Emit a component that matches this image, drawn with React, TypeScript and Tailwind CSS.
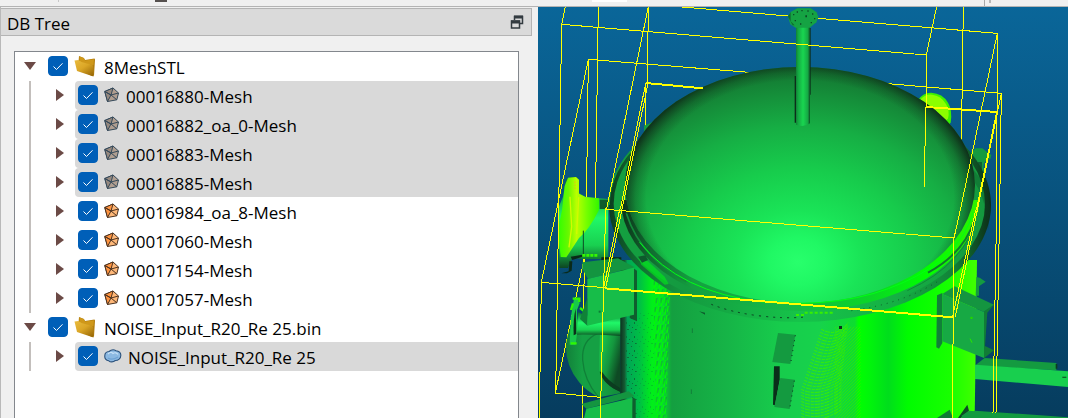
import { useState } from 'react';

type IconKind = 'mesh' | 'cloud';

interface TreeItem {
  id: string;
  name: string;
  icon: IconKind;
  selected: boolean;
}

interface TreeGroup {
  id: string;
  name: string;
  items: TreeItem[];
}

const GROUPS: TreeGroup[] = [
  {
    id: 'stl',
    name: '8MeshSTL',
    items: [
      { id: 'm1', name: '00016880-Mesh', icon: 'mesh', selected: true },
      { id: 'm2', name: '00016882_oa_0-Mesh', icon: 'mesh', selected: true },
      { id: 'm3', name: '00016883-Mesh', icon: 'mesh', selected: true },
      { id: 'm4', name: '00016885-Mesh', icon: 'mesh', selected: true },
      { id: 'm5', name: '00016984_oa_8-Mesh', icon: 'mesh', selected: false },
      { id: 'm6', name: '00017060-Mesh', icon: 'mesh', selected: false },
      { id: 'm7', name: '00017154-Mesh', icon: 'mesh', selected: false },
      { id: 'm8', name: '00017057-Mesh', icon: 'mesh', selected: false },
    ],
  },
  {
    id: 'noise',
    name: 'NOISE_Input_R20_Re 25.bin',
    items: [{ id: 'c1', name: 'NOISE_Input_R20_Re 25', icon: 'cloud', selected: true }],
  },
];

function Arrow({ open }: { open: boolean }) {
  return (
    <svg width="12" height="12" viewBox="0 0 12 12" fill="#6b4a46">
      {open ? <path d="M0 2h12L6 10z" /> : <path d="M2 0v12l8-6z" />}
    </svg>
  );
}

function CheckBox({ id }: { id: string }) {
  return (
    <span className="relative block size-5 shrink-0">
      <input
        id={id}
        type="checkbox"
        defaultChecked
        className="peer block size-5 appearance-none rounded border border-[#8a8a8a] bg-white checked:border-[#005fb8] checked:bg-[#005fb8]"
      />
      <svg
        className="pointer-events-none absolute inset-0 hidden peer-checked:block"
        viewBox="0 0 20 20"
        fill="none"
        stroke="white"
        strokeWidth="1"
      >
        <path d="M5.500 10.500l3 3 6-6.200" />
      </svg>
    </span>
  );
}

function FolderIcon() {
  return (
    <svg width="22" height="22" viewBox="0 0 22 22" className="shrink-0">
      <defs>
        <linearGradient id="folder" x1="0" y1="0" x2="0.8" y2="1">
          <stop offset="0" stopColor="#e9bb3e" />
          <stop offset="0.5" stopColor="#dba626" />
          <stop offset="1" stopColor="#9c6c08" />
        </linearGradient>
      </defs>
      <path d="M5 1l5 2 1 2 9.500-1.500.5 1-1 16-2 .5L4 14z" fill="#b17c0c" />
      <path d="M5.500 1.500L9.500 3l1.500 2.500 9-1.300-.5 6-14-3z" fill="#cf981a" />
      <path d="M.5 5.500l4-.5 3 2L17 9.500c1.500.4 2 1 2.200 2.500L19.500 21.500 3 16z" fill="url(#folder)" />
    </svg>
  );
}

function MeshIcon({ dim }: { dim: boolean }) {
  return (
    <svg
      width="16"
      height="16"
      viewBox="0 0 16 16"
      className="shrink-0"
      stroke={dim ? '#34495a' : '#4b3220'}
      strokeWidth="1"
      strokeLinejoin="round"
    >
      <path d="M9 1l5.500 5L12.800 12.800 3.500 14.500.8 4.500z" fill={dim ? '#b09e90' : '#ffb878'} />
      <path d="M7 8L.8 4.500 9 1zM7 8l-3.500 6.500L.8 4.500z" fill={dim ? '#96897f' : '#ff9440'} />
      <path d="M7 8l7.500-2M7 8l5.800 4.800" fill="none" />
    </svg>
  );
}

function CloudIcon() {
  return (
    <svg width="18" height="14" viewBox="0 0 18 14" className="shrink-0">
      <path
        d="M5 2.500C7 .8 10 .5 12 1.700c3 .2 5 2.300 4.800 4.800 0 3-2.500 5-5.500 5-2 1.800-5 1.700-6.500.3C2 11.500.5 9.500.8 6.800.8 4.500 2.500 2.700 5 2.500z"
        fill="#8cb9e2"
        stroke="#2b527d"
        strokeWidth="1.100"
      />
      <path d="M4 5c2-2 4-1.500 5-.5 2-1.500 4-.5 5 1" stroke="#c6e0f6" strokeWidth="1.200" fill="none" />
      <path d="M4 9c2 1.500 6 1.500 10-1" stroke="#6fa3d4" strokeWidth="1.200" fill="none" />
    </svg>
  );
}

function GroupNode({ group }: { group: TreeGroup }) {
  const [open, setOpen] = useState(true);

  return (
    <li>
      <div className="flex h-[29px] items-center pb-px">
        <button
          type="button"
          aria-label={group.name}
          className="mr-3 ml-[9px] shrink-0"
          onClick={() => setOpen(!open)}
        >
          <Arrow open={open} />
        </button>
        <CheckBox id={group.id} />
        <span className="ml-[6px] mr-2">
          <FolderIcon />
        </span>
        <label htmlFor={group.id} className="truncate pt-[3px]">
          {group.name}
        </label>
      </div>
      {open && (
        <ul className="ml-[14px] border-l-2 border-[#c3bfbc]">
          {group.items.map(item => (
            <ItemNode key={item.id} item={item} />
          ))}
        </ul>
      )}
    </li>
  );
}

function ItemNode({ item }: { item: TreeItem }) {
  return (
    <li className="flex h-[29px] items-center">
      <button type="button" aria-label={item.name} className="mr-[9px] ml-[23px] shrink-0 pb-px">
        <Arrow open={false} />
      </button>
      <div
        className={
          item.selected
            ? 'flex h-full min-w-0 flex-1 items-center rounded-l-sm bg-[#d9d9d9] pb-px pl-[3px]'
            : 'flex h-full min-w-0 flex-1 items-center pb-px pl-[3px]'
        }
      >
        <CheckBox id={item.id} />
        <span className="mx-[6px]">
          {item.icon === 'mesh' ? <MeshIcon dim={item.selected} /> : <CloudIcon />}
        </span>
        <label htmlFor={item.id} className="truncate pt-[3px]">
          {item.name}
        </label>
      </div>
    </li>
  );
}

// [x1, y1, x2, y2] in scene units
const BACK_LINES = [
  [181, 20, 172, 620],
  [151, 178, 633, 217],
  [1038, 250, 1390, 280],
  [331, 20, 328, 250],
  [323, 250, 321, 390],
  [151, 180, 145, 620],
  [139, 774, 133, 1254],
  [139, 774, 52, 1179],
  [420, 20, 750, 48],
  [840, 55, 1378, 100],
  [1276, 20, 1270, 440],
];

const FRONT_LINES = [
  [82, 20, 71, 73],
  [71, 73, 1165, 165],
  [71, 73, 53, 1179],
  [52, 1179, 187, 1192],
  [151, 178, 10, 847],
  [10, 847, 200, 863],
  [10, 847, 4, 1254],
  [331, 20, 205, 630],
  [323, 250, 247, 628],
  [330, 250, 252, 628],
  [252, 628, 203, 864],
  [245, 628, 197, 864],
  [203, 624, 187, 1254],
  [203, 628, 1248, 714],
  [1248, 714, 1243, 1254],
  [1378, 100, 1267, 630],
  [1267, 630, 1248, 714],
  [1196, 20, 1165, 165],
  [1165, 165, 1165, 320],
  [1163, 320, 1159, 560],
  [1378, 100, 1376, 624],
  [1376, 624, 1365, 1238],
  [1390, 280, 1385, 624],
  [1385, 624, 1374, 1238],
  [1390, 280, 1318, 630],
  [1375, 340, 1315, 630],
  [1318, 630, 1252, 950],
  [1313, 630, 1244, 950],
];

const THICK_LINES = [
  [323, 249, 495, 265],
  [1165, 321, 1378, 336],
  [200, 865, 795, 914],
  [795, 914, 1245, 952],
];

function Lines({ lines, width }: { lines: number[][]; width: number }) {
  return (
    <g stroke="#ffff00" strokeWidth={width} fill="none" shapeRendering="crispEdges">
      {lines.map(([x1, y1, x2, y2], i) => (
        <line key={i} x1={x1} y1={y1} x2={x2} y2={y2} />
      ))}
    </g>
  );
}

function Scene() {
  return (
    <svg
      className="block h-full w-full"
      viewBox="0 21 1590 1233"
      preserveAspectRatio="xMinYMin slice"
      role="img"
      aria-label="3D view"
    >
      <defs>
        <linearGradient id="sky" x1="0" y1="0" x2="0" y2="1">
          <stop offset="0" stopColor="#0a6699" />
          <stop offset="1" stopColor="#063c5e" />
        </linearGradient>
        <radialGradient
          id="dome"
          gradientUnits="userSpaceOnUse"
          cx="0"
          cy="0"
          r="1"
          gradientTransform="translate(780 786) scale(860 700)"
        >
          <stop offset="0" stopColor="#28ff6c" />
          <stop offset="0.1" stopColor="#20f864" />
          <stop offset="0.22" stopColor="#1ae457" />
          <stop offset="0.4" stopColor="#17cc4c" />
          <stop offset="0.58" stopColor="#16ae44" />
          <stop offset="0.72" stopColor="#158f3a" />
          <stop offset="0.85" stopColor="#13702f" />
        </radialGradient>
        <radialGradient
          id="domeEdge"
          gradientUnits="userSpaceOnUse"
          cx="0"
          cy="0"
          r="1"
          gradientTransform="translate(786 592) scale(536 408)"
        >
          <stop offset="0.86" stopColor="#0e2717" stopOpacity="0" />
          <stop offset="0.92" stopColor="#0e2717" stopOpacity="0.250" />
          <stop offset="0.96" stopColor="#0e2717" stopOpacity="0.550" />
          <stop offset="1" stopColor="#0e2717" stopOpacity="0.950" />
        </radialGradient>
        <linearGradient id="body" gradientUnits="userSpaceOnUse" x1="247" y1="0" x2="1312" y2="0">
          <stop offset="0" stopColor="#0b3320" />
          <stop offset="0.012" stopColor="#155a33" />
          <stop offset="0.02" stopColor="#00a556" />
          <stop offset="0.055" stopColor="#00c044" />
          <stop offset="0.09" stopColor="#00f018" />
          <stop offset="0.12" stopColor="#08d830" />
          <stop offset="0.145" stopColor="#149f40" />
          <stop offset="0.3" stopColor="#16b447" />
          <stop offset="0.45" stopColor="#17cc4c" />
          <stop offset="0.56" stopColor="#17d24c" />
          <stop offset="0.66" stopColor="#0ddc30" />
          <stop offset="0.672" stopColor="#00ff00" />
          <stop offset="0.7" stopColor="#00f60a" />
          <stop offset="0.755" stopColor="#00de1c" />
          <stop offset="0.81" stopColor="#00fc00" />
          <stop offset="0.93" stopColor="#18ff00" />
          <stop offset="1" stopColor="#40ff00" />
        </linearGradient>
        <linearGradient id="rimSide" gradientUnits="userSpaceOnUse" x1="213" y1="0" x2="1360" y2="0">
          <stop offset="0" stopColor="#0d3c20" />
          <stop offset="0.08" stopColor="#117032" />
          <stop offset="0.2" stopColor="#149a40" />
          <stop offset="0.5" stopColor="#16c44a" />
          <stop offset="0.75" stopColor="#15b044" />
          <stop offset="0.9" stopColor="#128238" />
          <stop offset="1" stopColor="#0c2c18" />
        </linearGradient>
        <linearGradient id="rimTop" gradientUnits="userSpaceOnUse" x1="213" y1="0" x2="1360" y2="0">
          <stop offset="0" stopColor="#14a040" />
          <stop offset="0.2" stopColor="#149a40" />
          <stop offset="0.5" stopColor="#16c44a" />
          <stop offset="0.75" stopColor="#15b044" />
          <stop offset="1" stopColor="#14963e" />
        </linearGradient>
        <linearGradient id="seat" gradientUnits="userSpaceOnUse" x1="249" y1="0" x2="1323" y2="0">
          <stop offset="0" stopColor="#0c3019" />
          <stop offset="0.08" stopColor="#116a30" />
          <stop offset="0.2" stopColor="#14a040" />
          <stop offset="0.45" stopColor="#15b848" />
          <stop offset="0.7" stopColor="#0bd626" />
          <stop offset="0.85" stopColor="#00ff00" />
          <stop offset="1" stopColor="#30f000" />
        </linearGradient>
        <linearGradient id="pipe" x1="0" y1="0" x2="1" y2="0">
          <stop offset="0" stopColor="#118036" />
          <stop offset="0.15" stopColor="#14a842" />
          <stop offset="0.5" stopColor="#19d650" />
          <stop offset="0.85" stopColor="#15a844" />
          <stop offset="1" stopColor="#0c4a22" />
        </linearGradient>
        <linearGradient id="neck" x1="0" y1="0" x2="0" y2="1">
          <stop offset="0" stopColor="#0f6a30" />
          <stop offset="0.45" stopColor="#20f868" />
          <stop offset="0.75" stopColor="#19d050" />
          <stop offset="1" stopColor="#0d4522" />
        </linearGradient>
        <linearGradient id="lime" x1="0" y1="0" x2="1" y2="0">
          <stop offset="0" stopColor="#30ff00" />
          <stop offset="0.25" stopColor="#68f800" />
          <stop offset="0.45" stopColor="#baff00" />
          <stop offset="0.7" stopColor="#74ff00" />
          <stop offset="1" stopColor="#34f600" />
        </linearGradient>
        <linearGradient id="vessel" x1="0" y1="0" x2="1" y2="0">
          <stop offset="0" stopColor="#12803a" />
          <stop offset="0.3" stopColor="#15a044" />
          <stop offset="0.65" stopColor="#15a044" />
          <stop offset="1" stopColor="#138a3a" />
        </linearGradient>
        <linearGradient id="vesselInner" x1="0.3" y1="0" x2="1" y2="0.5">
          <stop offset="0" stopColor="#17c04a" />
          <stop offset="0.5" stopColor="#14963e" />
          <stop offset="1" stopColor="#0e4a24" />
        </linearGradient>
        <pattern id="weave" width="14" height="27" patternUnits="userSpaceOnUse" patternTransform="skewX(-8)">
          <path d="M2 0v18M9 9v18" stroke="#00ff00" strokeWidth="4" />
          <path d="M6 3v15" stroke="#149f40" strokeWidth="3" />
        </pattern>
        <pattern id="grain" width="24" height="42" patternUnits="userSpaceOnUse">
          <path d="M0 0h3v6H0zM9 9h3v3H9zM3 21h6v3H3zM15 30h3v3h-3zM18 15h3v3h-3z" fill="#0c7038" />
        </pattern>
        <pattern id="dither" width="9" height="9" patternUnits="userSpaceOnUse">
          <path d="M0 0h3v3H0zM3 6h3v3H3zM6 3h3v3H6z" fill="#38e800" />
        </pattern>
      </defs>

      <rect y="21" width="1590" height="1233" fill="url(#sky)" />
      <Lines lines={BACK_LINES} width={3} />

      {/* nozzles on the far side */}
      <path d="M1140 301q14-24 40-23 34 2 50 30 14 22 8 60l-11 10-60-50z" fill="#3cf000" />
      <path d="M1148 298q14-16 34-14 28 3 42 28 12 20 6 44l-8 6-50-40z" fill="#8cff00" />
      <path d="M1298 459l15-14h20l15 12 12 8-3 12-12 3-8 12v40h-20l-29-50z" fill="#149a40" />
      <path d="M1320 486h12v60h-12z" fill="#0f6030" />
      <path d="M318 377l28-12 6 18-34 10z" fill="#149a40" />

      {/* upper left nozzle */}
      <path d="M75 590L84 540l12-9h20l7 10v38l20 13 68 5v180H135l-33-4-12 31H64l-3-180z" fill="url(#neck)" />
      <path d="M72 630l8-72 10-25 24-2 9 8v42l20 10 40 4v35q-30 60-60 84l-38 58-17-1-8-80z" fill="url(#lime)" />
      <path d="M96 590l5 90-8 62M122 592l-6 110" stroke="#d2fa00" strokeWidth="4" fill="none" />
      <path d="M111 545v24" stroke="#ff9a20" strokeWidth="3" strokeDasharray="3 6" />
      <path d="M185 599h26v28h-26z" fill="#0e5a2c" />
      <path d="M136 692v70" stroke="#0d4a25" strokeWidth="3" />
      <path d="M94 784h9l-2 28-14 8H70l22-6zM103 780l30-10v-6l-35 6zM190 772h60v8h-60z" fill="#0a2a18" />
      <path d="M133 766h46" stroke="#36f800" strokeWidth="8" strokeDasharray="9 3" />

      {/* lower left vessel */}
      <path d="M84 1040q4-70 48-90h115v230l-64 12q-40-20-60-46-40-50-39-106z" fill="url(#vessel)" />
      <path d="M186 990h61v186q-50-22-64-64z" fill="url(#vesselInner)" />
      <path d="M192 1115q15 25 55 50v10q-50-20-62-60z" fill="#0c3c20" />
      <path d="M180 1000q-50 20-46 80t46 110" fill="none" stroke="#108038" strokeWidth="4" />
      <path d="M120 936q40 24 128 6v66q-80-5-132-4z" fill="url(#neck)" />
      <path d="M108 896h14l3 14-8 20v70l-4 34H95l3-80z" fill="#18c84c" />
      <path d="M104 896h20v10M99 930l6-20M116 1030H98M126 924l16 12" fill="none" stroke="#30f800" strokeWidth="7" />
      <path d="M113 926q-8 30-6 80l8-4z" fill="#0b3019" />

      {/* shell */}
      <path d="M247 780h1070l-7 474H247z" fill="url(#body)" />
      <path d="M262 940h34v314h-34z" fill="url(#grain)" />
      <path d="M296 940h54v314h-54z" fill="url(#grain)" opacity="0.300" />
      <path d="M345 790l52 60-12 404h-32z" fill="url(#weave)" />
      <path d="M890 980h78v274H890z" fill="url(#dither)" opacity="0.600" />
      <g fill="none" stroke="#38f000" strokeWidth="3" strokeDasharray="9 3 15 3">
        {Array.from({ length: 30 }).map((_, i) => (
          <path key={i} d={`M${850 - Math.min(i * 3, 60)} ${988 + i * 9}q50 26 ${80 + Math.min(i * 2, 40)} -20`} />
        ))}
      </g>
      <path d="M463 985v14M460 1168v14" stroke="#12803a" strokeWidth="3" />

      {/* rim and dome */}
      <ellipse cx="786" cy="615" rx="573" ry="351" fill="url(#rimSide)" />
      <path d="M213 615a573 351 0 0 1 90-188" fill="none" stroke="#149a40" strokeWidth="5" />
      <ellipse cx="784" cy="612" rx="557" ry="335" fill="url(#rimTop)" />
      <path d="M300 770l30 14 50 46 12 22-12 2-70-60z" fill="#00f018" opacity="0.600" />
      <path d="M1298 500q50 50 60 130l-8 60q-4-100-52-160z" fill="#0d3c20" opacity="0.300" />
      <path d="M520 913q60 24 140 34t140 4" fill="none" stroke="#0d3c20" strokeWidth="3" strokeDasharray="6 15" />
      <path d="M940 932q150-20 260-88" fill="none" stroke="#0d5a28" strokeWidth="3" strokeDasharray="3 15" />
      <path d="M249 600a537 333 0 0 0 1074 0z" fill="url(#seat)" />
      <path d="M265 640q40 130 180 205" fill="none" stroke="#138a3a" strokeWidth="5" />
      <path d="M1318 640q-30 150-210 232" fill="none" stroke="#118a36" strokeWidth="3" />
      <ellipse cx="786" cy="555" rx="525" ry="354" fill="url(#dome)" />
      <ellipse cx="786" cy="555" rx="525" ry="354" fill="url(#domeEdge)" />
      <path d="M305 727q120 150 370 179 250 20 420-58 170-74 210-210" fill="none" stroke="#00ff14" strokeWidth="3" />
      <path d="M1170 818q110-60 140-160" fill="none" stroke="#0f7a2c" strokeWidth="6" />
      <path d="M300 770l22-4 8 14-18 8zM483 934l18 4v6z" fill="#0e5a2c" />
      <path d="M774 945h30M800 938h90" stroke="#38f000" strokeWidth="6" strokeDasharray="9 6" />
      <path d="M903 978h9v9h-9z" fill="#0b3019" />

      {/* top pipe */}
      <path d="M770 228h6v140h-6zM813 84h5v200h-5z" fill="#0c2e1a" />
      <path d="M774 80h42v290q-18 14-42 4z" fill="url(#pipe)" />
      <path d="M750 50l8-14 20-11h40l18 12 5 14-6 16-20 16h-42l-16-10z" fill="#15a343" />
      <path d="M750 50l8-14v28l12 12h-6z" fill="#0f6a30" />
      <g fill="#0c4a24">
        <path d="M765 42h4v4h-4zM776 34h4v4h-4zM790 30h4v4h-4zM808 31h4v4h-4zM822 40h4v4h-4zM828 54h4v4h-4zM818 66h4v4h-4zM786 70h4v4h-4zM770 60h4v4h-4zM802 46h5v6h-5z" />
      </g>

      {/* left brackets */}
      <g transform="translate(0 624)">
        <path d="M133 183v-20l107-12 50 27-140 35z" fill="#149540" />
        <path d="M285 180l12 8v152l-22-10z" fill="#0f5e2e" />
        <path d="M148 213l140-34v141l-140 33z" fill="#17bd49" />
        <path d="M148 270v83l-22-20z" fill="#108238" />
        <path d="M130 588l142-38 18 15-145 37z" fill="#149540" />
        <path d="M283 567l10 6v60h-12z" fill="#0f5e2e" />
        <path d="M145 602l138-32v60H138z" fill="#17bd49" />
        <path d="M182 308h6v6h-6z" fill="#0f7a35" />
      </g>

      {/* shell slots */}
      <g transform="translate(0 624)" fill="#149a40">
        <path d="M720 375l52 5-15 88-54-6z" />
        <path d="M708 475h17v40l-14 77-6-2z" fill="#0a2e1a" />
        <path d="M727 510l43 5-15 88-46-6z" />
        <path d="M772 382l-14 84M769 518l-14 84" stroke="#0a2e1a" strokeWidth="3" strokeDasharray="3 12" />
      </g>

      {/* right bracket and beams */}
      <g transform="translate(795 624)">
        <path d="M520 207l10 2 18 12-20 14v28h-10z" fill="#149a40" />
        <path d="M545 450l215 15v22l-245-14z" fill="#149a40" />
        <path d="M516 470l279 20v47l-279-24z" fill="#18cf4e" />
        <path d="M758 468h5v14h-5zM778 506h12v3h-12z" fill="#0c3c20" />
        <path d="M515 608l280 20v12H480z" fill="#149a40" />
        <path d="M402 262l16-7v150l-10 17-8-4z" fill="#118038" />
        <path d="M418 258l37-23 118 55-30 22z" fill="#149540" />
        <path d="M418 258l125 54v138l-125-50z" fill="#17a944" />
        <path d="M543 310l30-20-20 24-7 100 27 13-30 24z" fill="#117c36" />
        <path d="M503 328h5v3h-5zM501 392l6 12" stroke="#28e800" strokeWidth="3" />
        <path d="M402 630l38-25 10 25z" fill="#117c36" />
        <path d="M465 630l28-40 5 18-25 22z" fill="#0d4a25" />
        <path d="M478 622l20-14 120 10v12H474z" fill="#149a40" />
      </g>

      <Lines lines={FRONT_LINES} width={3} />
      <Lines lines={THICK_LINES} width={6} />
    </svg>
  );
}

export default function App() {
  return (
    <div
      className="flex h-screen flex-col overflow-hidden bg-[#f0f0f0] text-[17px] leading-6 text-black"
      style={{ fontFamily: '"Segoe UI", "Open Sans", "Noto Sans", sans-serif' }}
    >
      {/* toolbar edge */}
      <div className="flex h-[7px] shrink-0 items-start border-b border-[#b4b4b4]">
        <span className="ml-[58px] h-[2px] w-px bg-[#c8c8c8]" />
        <span className="ml-24 h-[2px] w-3 bg-[#55504e]" />
        <span className="ml-[425px] h-[2px] w-[35px] bg-white" />
        <span className="ml-[357px] h-[6px] w-px bg-[#a8a8a8]" />
        <span className="ml-1 h-[3px] w-[2px] bg-[#b8b8b8]" />
      </div>

      <div className="flex min-h-0 flex-1">
        <aside className="flex w-1/2 max-w-[532px] shrink-0 flex-col border-l border-[#b9b9b9] pt-px">
          <header className="flex h-7 shrink-0 items-center justify-between border border-l-0 border-[#b4b4b4] bg-[#dadada] pr-[7px] pl-[6px]">
            <h1 className="pt-[3px]">DB Tree</h1>
            <button type="button" aria-label="Float">
              <svg width="14" height="14" viewBox="0 0 14 14" fill="none" stroke="#333b40">
                <path d="M4.500 5V1.500h8v7H9" strokeWidth="1.500" />
                <path d="M4 2h9" strokeWidth="3" />
                <path d="M1.500 6h8v7h-8z" strokeWidth="1.500" fill="#dadada" />
                <path d="M1 7h9" strokeWidth="3" />
              </svg>
            </button>
          </header>
          <ul className="mx-[13px] mt-[15px] min-h-0 flex-1 overflow-hidden border border-b-0 border-[#83878d] bg-white">
            {GROUPS.map(group => (
              <GroupNode key={group.id} group={group} />
            ))}
          </ul>
        </aside>
        <main className="ml-[6px] min-w-0 flex-1">
          <Scene />
        </main>
      </div>
    </div>
  );
}
